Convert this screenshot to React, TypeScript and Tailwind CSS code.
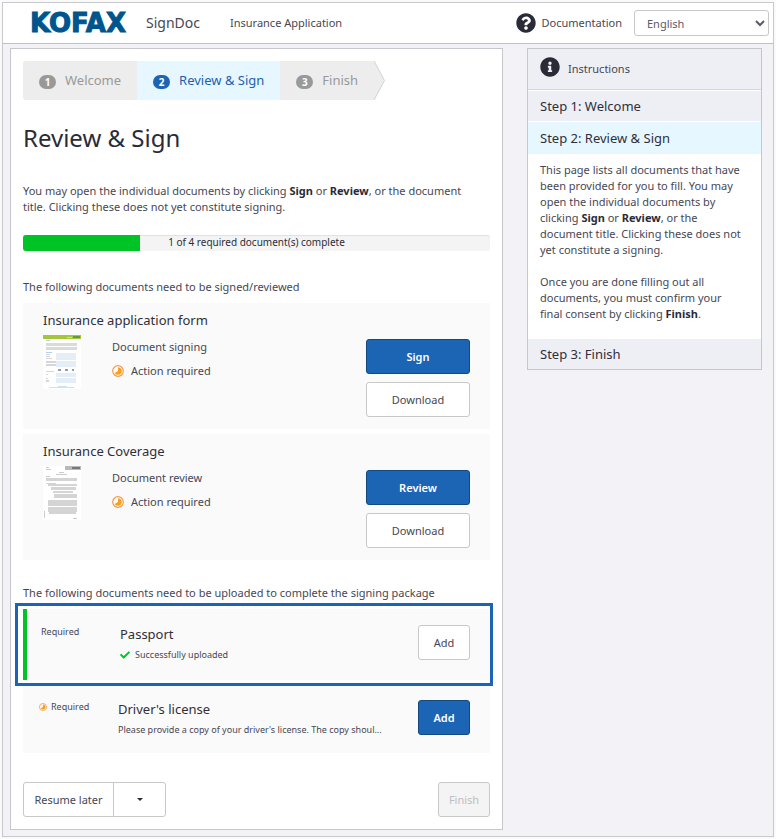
import { useState } from "react"
import type { ReactNode } from "react"
import { FaCheck, FaInfoCircle, FaQuestionCircle } from "react-icons/fa"

const steps = ["Welcome", "Review & Sign", "Finish"]

const primaryButton =
  "h-[35px] rounded-[3px] border border-[#14497f] bg-[#1c65b5] font-semibold text-white hover:bg-[#17549a]"
const plainButton =
  "h-[35px] rounded-[3px] border border-[#c8c8c8] bg-white text-[#474753] hover:bg-gray-50"

const Logo = () => (
  <svg width="103" height="38" viewBox="0 0 103 38" role="img" aria-label="Kofax">
    <text
      x="-1"
      y="28"
      fontFamily="'DejaVu Sans', sans-serif"
      fontWeight="700"
      fontSize="26"
      fill="#00558c"
      stroke="#00558c"
      strokeWidth="1"
      className="overflow-visible"
    >
      KOFAX
    </text>
  </svg>
)

const PendingIcon = ({ className }: { className: string }) => (
  <svg viewBox="0 0 12 12" className={className} aria-hidden="true">
    <circle cx="6" cy="6" r="5.3" fill="none" stroke="#f79a4b" strokeWidth="1.2" />
    <path d="M6 2.2a3.8 3.8 0 1 1-3.3 5.7L6 6z" fill="#f9a01b" />
  </svg>
)

const FormThumb = () => (
  <svg width="38" height="54" viewBox="0 0 38 54" className="mr-[31px] shrink-0" aria-hidden="true">
    <path fill="#fff" d="M0 0h38v54H0z" />
    <path fill="#a4c639" d="M0 0h38v4H0z" />
    <path fill="#5f9a4a" d="M30 1h7v2h-7z" />
    <path fill="#d5e08f" d="M24 2h5v1h-5z" />
    <path fill="#b5cfe6" d="M3 5h4v1H3zM3 17h6v1H3z" />
    <path fill="#cfe0f0" d="M15 51h9v1h-9zM6 52h25v1H6z" />
    <path fill="#dadadd" d="M3 8h31v3H3zM3 12h31v3H3z" />
    <path fill="#e5edf7" d="M13 18h20v7H13zM13 26h20v6H13zM13 38h20v4H13zM13 43h20v5H13z" />
    <path fill="#d6d6da" d="M3 19h4v1H3zM3 21h4v1H3zM3 23h6v1H3zM3 26h10v2H3zM3 29h10v2H3zM3 36h8v1H3zM3 39h2v1H3zM3 43h2v1H3zM3 45h3v2H3z" />
    <path fill="#9a9aa2" d="M15 34h3v2h-3zM22 34h3v2h-3zM29 34h2v2h-2z" />
  </svg>
)

const CoverageThumb = () => (
  <svg width="38" height="54" viewBox="0 0 38 54" className="mr-[31px] shrink-0" aria-hidden="true">
    <path fill="#fff" d="M0 0h38v54H0z" />
    <path fill="#b9b9b9" d="M22 0h16v4H22z" />
    <path fill="#777" d="M29 1h8v2h-8z" />
    <path fill="#ccc" d="M3 1h3v1H3zM3 3h5v1H3zM16 6h5v1h-5zM13 8h11v1H13zM3 10h4v1H3zM1 45h1v7H1zM30 52h4v1h-4z" />
    <path fill="#d4d4d4" d="M3 12h31v3H3zM3 17h10v1H3zM5 18h29v2H5zM8 21h25v3H8zM10 25h20v2H10zM11 28h23v4H11zM5 34h29v6H5zM5 41h29v5H5zM6 46h27v2H6z" />
  </svg>
)

const Wizard = () => (
  <nav aria-label="Progress" className="flex">
    <ol className="flex h-[39px] overflow-hidden rounded-l-[3px] text-[13px]">
      {steps.map((step, i) => (
        <li
          key={step}
          aria-current={i === 1 ? "step" : undefined}
          className={`flex items-center px-4 pb-0.5 ${
            i === 1 ? "bg-[#e6f7ff] text-[#1f5fae]" : "bg-[#ededed] text-[#999]"
          }`}
        >
          <span
            className={`mt-[5px] mr-[9px] flex h-[14px] w-[17px] items-center justify-center rounded-full text-[10px] font-bold text-white ${
              i === 1 ? "bg-[#1c65b5]" : "bg-[#999]"
            }`}
          >
            {i + 1}
          </span>
          {step}
        </li>
      ))}
    </ol>
    <svg width="12" height="39" viewBox="0 0 12 39" aria-hidden="true">
      <path d="M0 0L10.500 19.500L0 39z" fill="#ededed" />
      <path d="M0 0L10.500 19.500L0 39" fill="none" stroke="#d2d2d2" />
    </svg>
  </nav>
)

type DocumentCardProps = {
  title: string
  kind: string
  action: string
  thumb: ReactNode
}

const DocumentCard = ({ title, kind, action, thumb }: DocumentCardProps) => (
  <article className="bg-[#fafafa] px-5 pt-2 pb-3">
    <h2 className="text-[13px] leading-[18px] text-[#2f2f3a]">{title}</h2>
    <div className="mt-1.5 flex items-start">
      {thumb}
      <div className="flex-1 leading-6">
        <p>{kind}</p>
        <p className="flex items-center">
          <PendingIcon className="mr-[7px] size-3" />
          Action required
        </p>
      </div>
      <div className="mt-1 flex w-[104px] flex-col gap-2">
        <button type="button" className={primaryButton}>
          {action}
        </button>
        <button type="button" className={plainButton}>
          Download
        </button>
      </div>
    </div>
  </article>
)

const App = () => {
  const [language, setLanguage] = useState("English")

  return (
    <div className="bg-[#fafafa] p-0.5 font-['Noto_Sans',sans-serif] text-[11px] leading-4 text-[#474753]">
      <div className="border border-[#c9c9cd] bg-[#f2f2f7]">
        {/* Header */}
        <header className="flex h-[41px] items-center border-b border-[#f5c816] bg-white pr-1 pl-7">
          <Logo />
          <span className="ml-3 text-[14px]">SignDoc</span>
          <span className="ml-[30px]">Insurance Application</span>
          <a href="#documentation" className="ml-auto flex items-center gap-1.5">
            <FaQuestionCircle className="size-5 text-[#2b2b38]" />
            Documentation
          </a>
          <select
            aria-label="Language"
            value={language}
            onChange={(e) => setLanguage(e.target.value)}
            className="ml-3 h-[26px] w-[135px] rounded-[3px] border border-[#c8c8c8] bg-white px-2 text-[#5a5a66]"
          >
            <option>English</option>
            <option>Deutsch</option>
          </select>
        </header>

        <div className="flex items-start gap-6 pt-1 pr-[11px] pb-1.5 pl-[7px]">
          <main className="min-w-0 flex-1 border border-[#c6c6cb] bg-white p-3">
            <Wizard />
            <h1 className="mt-[22px] text-[24px] leading-8 text-[#2b2b38]">Review & Sign</h1>
            <p className="mt-[29px] pr-4">
              You may open the individual documents by clicking{" "}
              <b className="text-[#2b2b38]">Sign</b> or <b className="text-[#2b2b38]">Review</b>, or
              the document title. Clicking these does not yet constitute signing.
            </p>

            {/* Progress */}
            <div
              role="progressbar"
              aria-valuenow={1}
              aria-valuemax={4}
              aria-label="Required documents complete"
              className="relative mt-5 h-4 overflow-hidden rounded-[3px] bg-[#f4f4f4] shadow-[inset_0_1px_1px_#e2e2e2]"
            >
              <div className="h-full w-1/4 bg-[#00c425]" />
              <span className="absolute inset-0 text-center text-[10px] leading-[15px] text-[#2b2b38]">
                1 of 4 required document(s) complete
              </span>
            </div>

            <p className="mt-7">The following documents need to be signed/reviewed</p>
            <div className="mt-2 flex flex-col gap-[5px]">
              <DocumentCard
                title="Insurance application form"
                kind="Document signing"
                action="Sign"
                thumb={<FormThumb />}
              />
              <DocumentCard
                title="Insurance Coverage"
                kind="Document review"
                action="Review"
                thumb={<CoverageThumb />}
              />
            </div>

            {/* Uploads */}
            <p className="mt-[25px]">
              The following documents need to be uploaded to complete the signing package
            </p>
            <div className="mt-0.5 -mr-[3px] -ml-2 border-3 border-[#1c65b5] py-[3px] pl-[5px]">
              <article className="flex h-[71px] items-start border-l-4 border-[#00c425] bg-[#fafafa] pt-4 pr-5 pl-3.5">
                <span className="w-[79px] text-[9px] leading-[14px]">Required</span>
                <div className="flex-1">
                  <h2 className="text-[13px] leading-[18px] text-[#2f2f3a]">Passport</h2>
                  <p className="mt-1 flex items-center text-[9px]">
                    <FaCheck className="mr-[5px] size-2.5 text-[#00c425]" />
                    Successfully uploaded
                  </p>
                </div>
                <button type="button" className={`w-[52px] ${plainButton}`}>
                  Add
                </button>
              </article>
            </div>
            <article className="flex h-[67px] items-start bg-[#fafafa] pt-3.5 pr-5 pl-4">
              <span className="flex w-[79px] shrink-0 items-center gap-1 text-[9px] leading-[14px]">
                <PendingIcon className="size-2" />
                Required
              </span>
              <div className="min-w-0 flex-1">
                <h2 className="text-[13px] leading-[18px] text-[#2f2f3a]">Driver's license</h2>
                <p className="mt-1 text-[9px] whitespace-nowrap">
                  Please provide a copy of your driver's license. The copy shoul...
                </p>
              </div>
              <button type="button" className={`w-[52px] shrink-0 ${primaryButton}`}>
                Add
              </button>
            </article>

            {/* Actions */}
            <div className="mt-[29px] flex justify-between">
              <div className="flex">
                <button type="button" className={`w-[91px] rounded-r-none ${plainButton}`}>
                  Resume later
                </button>
                <button
                  type="button"
                  aria-label="More options"
                  className={`-ml-px flex w-[53px] items-center justify-center rounded-l-none ${plainButton}`}
                >
                  <svg width="6" height="3" viewBox="0 0 6 3" aria-hidden="true">
                    <path d="M0 0h6L3 3z" fill="#2b2b38" />
                  </svg>
                </button>
              </div>
              <button
                type="button"
                disabled
                className="h-[35px] w-[52px] rounded-[3px] border border-[#c8c8c8] bg-[#f4f4f4] text-[#bdbdbd]"
              >
                Finish
              </button>
            </div>
          </main>

          {/* Instructions */}
          <aside className="w-[235px] shrink-0 border border-[#c6c6cb] bg-white">
            <div className="flex h-[41px] items-center gap-2 border-b border-[#d5d5da] bg-[#eeeef5] px-3">
              <FaInfoCircle className="mb-1 size-5 text-[#2b2b38]" />
              <h2>Instructions</h2>
            </div>
            <h3 className="mt-px bg-[#eeeef5] px-3 py-1.5 text-[13px] leading-[18px] text-[#2f2f3a]">
              Step 1: Welcome
            </h3>
            <h3 className="mt-px bg-[#e6f7ff] px-3 py-[7px] text-[13px] leading-[18px] text-[#2f2f3a]">
              Step 2: Review & Sign
            </h3>
            <div className="flex flex-col gap-4 pt-2 pr-[18px] pb-[17px] pl-3">
              <p>
                This page lists all documents that have been provided for you to fill. You may open
                the individual documents by clicking <b className="text-[#2b2b38]">Sign</b> or{" "}
                <b className="text-[#2b2b38]">Review</b>, or the document title. Clicking these does
                not yet constitute a signing.
              </p>
              <p>
                Once you are done filling out all documents, you must confirm your final consent by
                clicking <b className="text-[#2b2b38]">Finish</b>.
              </p>
            </div>
            <h3 className="bg-[#eeeef5] px-3 py-1.5 text-[13px] leading-[18px] text-[#2f2f3a]">
              Step 3: Finish
            </h3>
          </aside>
        </div>
      </div>
    </div>
  )
}

export default App
